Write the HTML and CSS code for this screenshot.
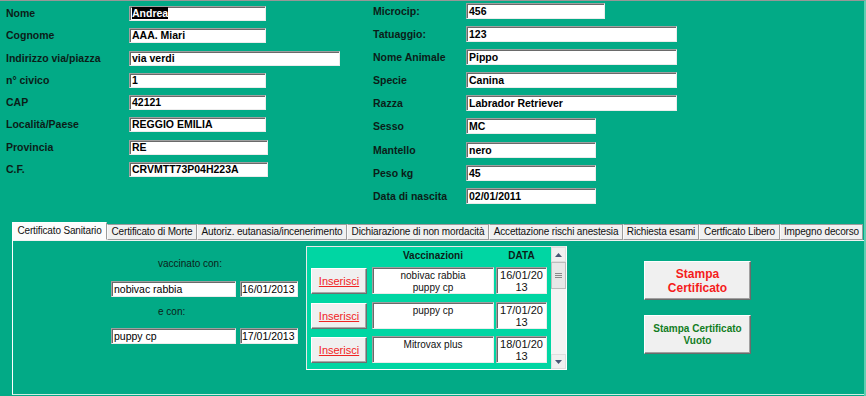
FILE: index.html
```html
<!DOCTYPE html>
<html lang="it">
<head>
<meta charset="utf-8">
<title>Certificato Sanitario</title>
<link rel="stylesheet" href="styles.css">
</head>
<body>
<div class="window">
  <div class="top">
    <div class="owner">
      <div class="lbl">Nome</div><div class="field w137"><span class="sel">Andrea</span></div>
      <div class="lbl">Cognome</div><div class="field w137">AAA. Miari</div>
      <div class="lbl">Indirizzo via/piazza</div><div class="field w211">via verdi</div>
      <div class="lbl">n° civico</div><div class="field w137">1</div>
      <div class="lbl">CAP</div><div class="field w137">42121</div>
      <div class="lbl">Località/Paese</div><div class="field w137">REGGIO EMILIA</div>
      <div class="lbl">Provincia</div><div class="field w139">RE</div>
      <div class="lbl">C.F.</div><div class="field w139">CRVMTT73P04H223A</div>
    </div>
    <div class="animal">
      <div class="lbl">Microcip:</div><div class="field w139">456</div>
      <div class="lbl">Tatuaggio:</div><div class="field w211">123</div>
      <div class="lbl">Nome Animale</div><div class="field w211">Pippo</div>
      <div class="lbl">Specie</div><div class="field w211">Canina</div>
      <div class="lbl">Razza</div><div class="field w211">Labrador Retriever</div>
      <div class="lbl">Sesso</div><div class="field w130">MC</div>
      <div class="lbl">Mantello</div><div class="field w130">nero</div>
      <div class="lbl">Peso kg</div><div class="field w130">45</div>
      <div class="lbl">Data di nascita</div><div class="field w130">02/01/2011</div>
    </div>
  </div>

  <div class="tabs">
    <div class="tab active">Certificato Sanitario</div>
    <div class="tab">Certificato di Morte</div>
    <div class="tab">Autoriz. eutanasia/incenerimento</div>
    <div class="tab">Dichiarazione di non mordacità</div>
    <div class="tab">Accettazione rischi anestesia</div>
    <div class="tab">Richiesta esami</div>
    <div class="tab">Certficato Libero</div>
    <div class="tab">Impegno decorso</div>
  </div>

  <div class="panel">
    <div class="vin">
      <div class="caption first">vaccinato con:</div>
      <div class="pair">
        <div class="field plain name">nobivac rabbia</div>
        <div class="field plain date">16/01/2013</div>
      </div>
      <div class="caption second">e con:</div>
      <div class="pair last">
        <div class="field plain name">puppy cp</div>
        <div class="field plain date">17/01/2013</div>
      </div>
    </div>

    <div class="vbox">
      <div class="vlist">
        <div class="vhead">
          <span class="hspace"></span>
          <span class="hname">Vaccinazioni</span>
          <span class="hdate">DATA</span>
        </div>
        <div class="vrow">
          <button class="ins">Inserisci</button>
          <div class="vcell">nobivac rabbia<br>puppy cp</div>
          <div class="dcell">16/01/2013</div>
        </div>
        <div class="vrow">
          <button class="ins">Inserisci</button>
          <div class="vcell">puppy cp</div>
          <div class="dcell">17/01/2013</div>
        </div>
        <div class="vrow">
          <button class="ins">Inserisci</button>
          <div class="vcell">Mitrovax plus</div>
          <div class="dcell">18/01/2013</div>
        </div>
      </div>
      <div class="scroll">
        <div class="sbtn"><svg width="7" height="4" viewBox="0 0 7 4"><path d="M0 4 L3.5 0 L7 4 Z" fill="#4a5675"/></svg></div>
        <div class="thumb"><svg width="7" height="5" viewBox="0 0 7 5"><path d="M0 0.5 H7 M0 2.5 H7 M0 4.5 H7" stroke="#8a8a8a" stroke-width="1"/></svg></div>
        <div class="track"></div>
        <div class="sbtn"><svg width="7" height="4" viewBox="0 0 7 4"><path d="M0 0 L3.5 4 L7 0 Z" fill="#4a5675"/></svg></div>
      </div>
    </div>

    <div class="actions">
      <button class="print red">Stampa<br>Certificato</button>
      <button class="print green">Stampa Certificato<br>Vuoto</button>
    </div>
  </div>
</div>
</body>
</html>
```
FILE: styles.css
```css
html, body {
  margin: 0;
  padding: 0;
  background: #02aa86;
}

.window {
  width: 866px;
  height: 396px;
  box-sizing: border-box;
  background: #02aa86;
  border-top: 1px solid #979797;
  border-right: 2px solid #5fcfb2;
  font-family: "Liberation Sans", Arial, sans-serif;
  color: #0b1d18;
  overflow: hidden;
}

/* ---------- top form ---------- */
.top {
  display: flex;
  height: 221px;
}

.owner {
  width: 367px;
  margin-left: 6px;
  padding-top: 5px;
  display: grid;
  grid-template-columns: 123px auto;
  grid-auto-rows: 22.3px;
  align-content: start;
  align-items: start;
}

.animal {
  padding-top: 2px;
  display: grid;
  grid-template-columns: 93px auto;
  grid-auto-rows: 23.1px;
  align-content: start;
  align-items: start;
}

.lbl {
  font-weight: bold;
  font-size: 10.5px;
  line-height: 15px;
  white-space: nowrap;
}

.animal .lbl {
  line-height: 16px;
}

.field {
  box-sizing: border-box;
  height: 15px;
  background: #fff;
  border: 1px solid;
  border-color: #a0a0a0 #ececec #ececec #a0a0a0;
  box-shadow: inset 1px 1px 0 #6a6a6a;
  font-weight: bold;
  font-size: 10.5px;
  line-height: 13px;
  padding-left: 2px;
  white-space: nowrap;
  overflow: hidden;
  color: #000;
}

.animal .field {
  height: 16px;
  line-height: 14px;
}

.w130 { width: 130px; }
.w137 { width: 137px; }
.w139 { width: 139px; }
.w211 { width: 211px; }

.sel {
  background: #000;
  color: #fff;
}

/* ---------- tabs ---------- */
.tabs {
  display: flex;
  align-items: flex-end;
  height: 18px;
  margin-left: 12px;
}

.tab {
  box-sizing: border-box;
  height: 16px;
  border: 1px solid #9c9c9c;
  border-left-color: #fafafa;
  background: #f0f0f0;
  font-size: 10px;
  letter-spacing: -0.15px;
  line-height: 14px;
  text-align: center;
  white-space: nowrap;
  color: #111;
}

.tab:nth-child(1) { width: 95px; }
.tab:nth-child(2) { width: 90px; }
.tab:nth-child(3) { width: 150px; }
.tab:nth-child(4) { width: 142px; }
.tab:nth-child(5) { width: 134px; }
.tab:nth-child(6) { width: 76px; }
.tab:nth-child(7) { width: 81px; }
.tab:nth-child(8) { width: 83px; }

.tab.active {
  height: 18px;
  background: #fcfcfc;
  border-color: #fff #9c9c9c #fcfcfc #fff;
  line-height: 16px;
}

/* ---------- panel ---------- */
.panel {
  height: 155px;
  box-sizing: border-box;
  margin-left: 12px;
  border-top: 1px solid #f2f2f2;
  border-left: 1px solid #fff;
  border-bottom: 1px solid #cdeee4;
  display: flex;
  align-items: flex-start;
  padding: 5px 0 0 98px;
}

.vin {
  width: 187px;
  display: flex;
  flex-direction: column;
}

.caption {
  font-size: 10px;
  line-height: 12px;
  padding-left: 47px;
  color: #0b1d18;
}

.caption.first { margin-top: 12px; }
.caption.second { margin-top: 9px; }

.pair {
  display: flex;
  gap: 4px;
  margin-top: 11px;
}

.pair.last { margin-top: 10px; }

.field.plain {
  font-weight: normal;
  font-size: 10.5px;
  height: 16px;
  line-height: 14px;
}

.field.name { width: 125px; }
.field.date { width: 58px; padding-left: 1px; }

/* ---------- vaccinations list ---------- */
.vbox {
  margin-left: 8px;
  width: 261px;
  height: 124px;
  box-sizing: border-box;
  border: 1px solid;
  border-color: #e8e8e8 #ffffff #ffffff #e8e8e8;
  background: #00d6a3;
  display: flex;
}

.vlist {
  flex: 1;
  padding: 1px 0 0 4px;
}

.vhead {
  display: flex;
  height: 19px;
  font-weight: bold;
  font-size: 10px;
  line-height: 14px;
  padding-top: 1px;
  box-sizing: border-box;
  color: #0b1d18;
}

.hspace { width: 61px; }
.hname { width: 122px; text-align: center; margin-right: 2px; }
.hdate { width: 51px; text-align: center; }

.vrow {
  display: flex;
  align-items: flex-start;
  height: 27px;
}

.vrow + .vrow { margin-top: 7.5px; }

.ins {
  box-sizing: border-box;
  width: 56px;
  height: 26px;
  margin: 1px 5px 0 0;
  padding: 0;
  background: #f0f0f0;
  border: 1px solid;
  border-color: #fff #6e6e6e #6e6e6e #fff;
  box-shadow: inset -1px -1px 0 #a8a8a8;
  color: #f02424;
  text-decoration: underline;
  font-family: "Liberation Sans", Arial, sans-serif;
  font-size: 11px;
}

.vcell,
.dcell {
  box-sizing: border-box;
  height: 27px;
  background: #fff;
  border: 1px solid;
  border-color: #a0a0a0 #ececec #ececec #a0a0a0;
  box-shadow: inset 1px 1px 0 #6a6a6a;
  text-align: center;
  color: #111;
}

.vcell {
  width: 122px;
  margin-right: 2px;
  font-size: 10px;
  line-height: 12px;
  padding-top: 2px;
}

.dcell {
  width: 51px;
  font-size: 11px;
  line-height: 12px;
  padding: 1px 2px 0;
  word-break: break-all;
}

/* scrollbar */
.scroll {
  width: 15px;
  display: flex;
  flex-direction: column;
  background: #f4f4f4;
}

.sbtn {
  height: 15px;
  box-sizing: border-box;
  background: #f0f0f0;
  border: 1px solid #dedede;
  display: flex;
  align-items: center;
  justify-content: center;
}

.thumb {
  height: 27px;
  box-sizing: border-box;
  background: #e8e8e8;
  border: 1px solid #bcbcbc;
  display: flex;
  align-items: center;
  justify-content: center;
}

.track { flex: 1; }

/* ---------- print buttons ---------- */
.actions {
  margin-left: 77px;
  margin-top: 15px;
  display: flex;
  flex-direction: column;
  gap: 15px;
}

.print {
  box-sizing: border-box;
  width: 107px;
  height: 39px;
  padding: 0;
  background: #f0f0f0;
  border: 1px solid;
  border-color: #fff #6b6b6b #6b6b6b #fff;
  box-shadow: inset -1px -1px 0 #a0a0a0;
  font-family: "Liberation Sans", Arial, sans-serif;
  font-weight: bold;
}

.print.red {
  color: #f51c1c;
  font-size: 12px;
  line-height: 14px;
}

.print.green {
  color: #137d1f;
  font-size: 10px;
  line-height: 12px;
}
```
